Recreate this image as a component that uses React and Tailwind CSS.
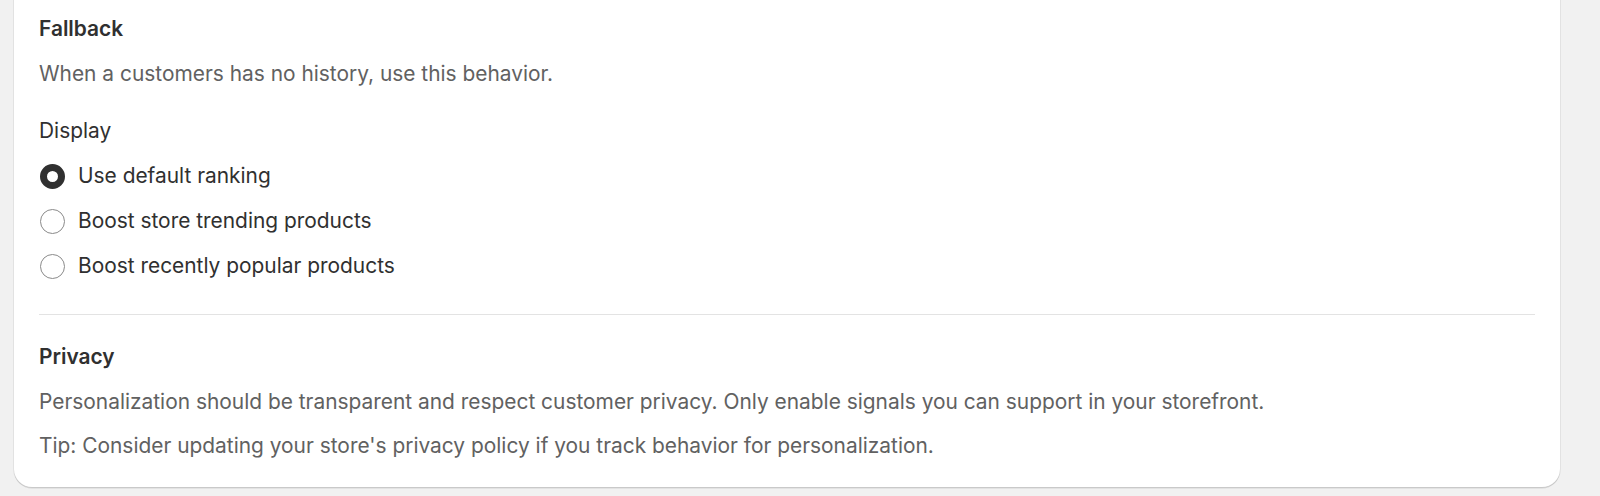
import React, { useState } from 'react'

const options = [
  { id: 'default', label: 'Use default ranking' },
  { id: 'trending', label: 'Boost store trending products' },
  { id: 'popular', label: 'Boost recently popular products' },
]

function Radio({ checked, label, onChange }) {
  return (
    <label className="flex h-[30px] cursor-pointer items-center gap-[13px] pl-px">
      <span
        className={
          checked
            ? 'h-[25px] w-[25px] shrink-0 rounded-full border-[7.5px] border-[#303030] bg-white'
            : 'h-[25px] w-[25px] shrink-0 rounded-full border border-[#8a8a8a] bg-white'
        }
      />
      <input type="radio" className="sr-only" checked={checked} onChange={onChange} />
      <span className="text-[#303030]">{label}</span>
    </label>
  )
}

export default function App() {
  const [display, setDisplay] = useState('default')

  return (
    <div className="h-[496px] overflow-hidden bg-[#f1f1f1] font-['Inter',sans-serif] text-[20.9px] leading-[30px]">
      <div className="ml-[14px] w-[1546px] rounded-b-[18px] bg-white px-[25px] pt-[14px] pb-[26px] shadow-[0_1.5px_0_0_rgba(26,26,26,0.12),0_0_0_1px_rgba(0,0,0,0.06)]">
        <h2 className="font-semibold text-[#303030]">Fallback</h2>
        <p className="mt-[15px] text-[#616161]">When a customers has no history, use this behavior.</p>

        <div className="mt-[27px] text-[#303030]">Display</div>
        <div className="mt-[15px] flex flex-col gap-[15px]">
          {options.map((o) => (
            <Radio key={o.id} label={o.label} checked={display === o.id} onChange={() => setDisplay(o.id)} />
          ))}
        </div>

        <div className="mt-[33px] border-t border-[#e3e3e3]" />

        <h2 className="mt-[27px] font-semibold text-[#303030]">Privacy</h2>
        <p className="mt-[15px] text-[#616161]">
          Personalization should be transparent and respect customer privacy. Only enable signals you can support in your storefront.
        </p>
        <p className="mt-[14px] text-[#616161]">Tip: Consider updating your store's privacy policy if you track behavior for personalization.</p>
      </div>
    </div>
  )
}
